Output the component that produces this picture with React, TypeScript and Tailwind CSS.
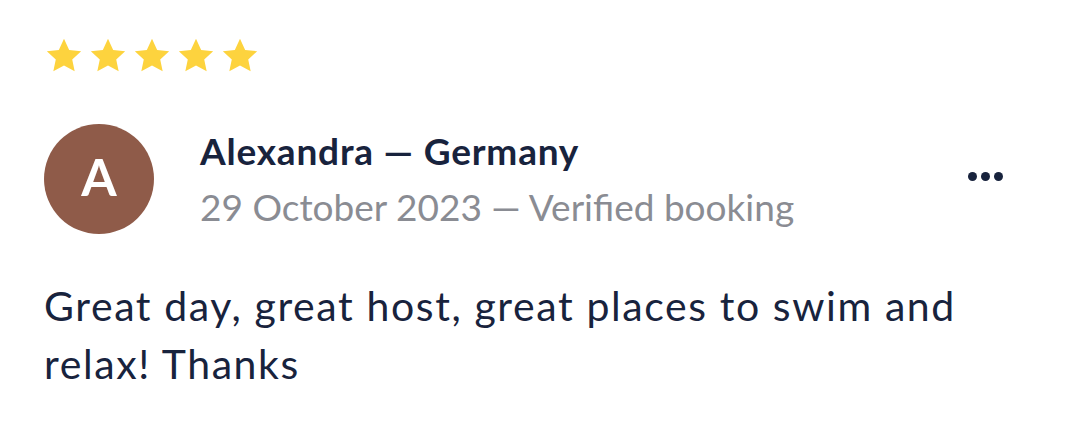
import React from 'react';

const Star = () => (
  <svg width="42" height="42" viewBox="0 0 24 24" className="block">
    <path
      d="M12 2.2l2.95 6.3 6.85.78-5.1 4.68 1.4 6.8L12 17.4l-6.1 3.36 1.4-6.8-5.1-4.68 6.85-.78z"
      fill="#fdd33e"
    />
  </svg>
);

export default function App() {
  return (
    <div className="w-[1080px] h-[439px] bg-white pl-[44px] pr-[77px] pt-[35px]" style={{ fontFamily: 'Lato, "Noto Sans", sans-serif' }}>
      {/* rating */}
      <div className="flex gap-[2px] ml-[-1px]">
        <Star />
        <Star />
        <Star />
        <Star />
        <Star />
      </div>

      {/* reviewer */}
      <div className="flex items-center mt-[47px]">
        <div className="w-[110px] h-[110px] rounded-full bg-[#8f5b49] flex items-center justify-center text-white text-[51px] font-bold pb-[4px]">
          A
        </div>
        <div className="ml-[46px] flex-1">
          <div className="text-[37px] font-bold text-[#18233d] leading-[44px] tracking-[0.8px]">Alexandra — Germany</div>
          <div className="text-[37px] text-[#8a8c93] leading-[44px] mt-[12px]">29 October 2023 — Verified booking</div>
        </div>
        <div className="flex gap-[4px] mb-[6px]">
          <span className="w-[9px] h-[9px] rounded-full bg-[#18233d]" />
          <span className="w-[9px] h-[9px] rounded-full bg-[#18233d]" />
          <span className="w-[9px] h-[9px] rounded-full bg-[#18233d]" />
        </div>
      </div>

      {/* review text */}
      <p className="mt-[43px] text-[41px] leading-[58px] tracking-[1.6px] text-[#18233d]">
        Great day, great host, great places to swim and relax! Thanks
      </p>
    </div>
  );
}
